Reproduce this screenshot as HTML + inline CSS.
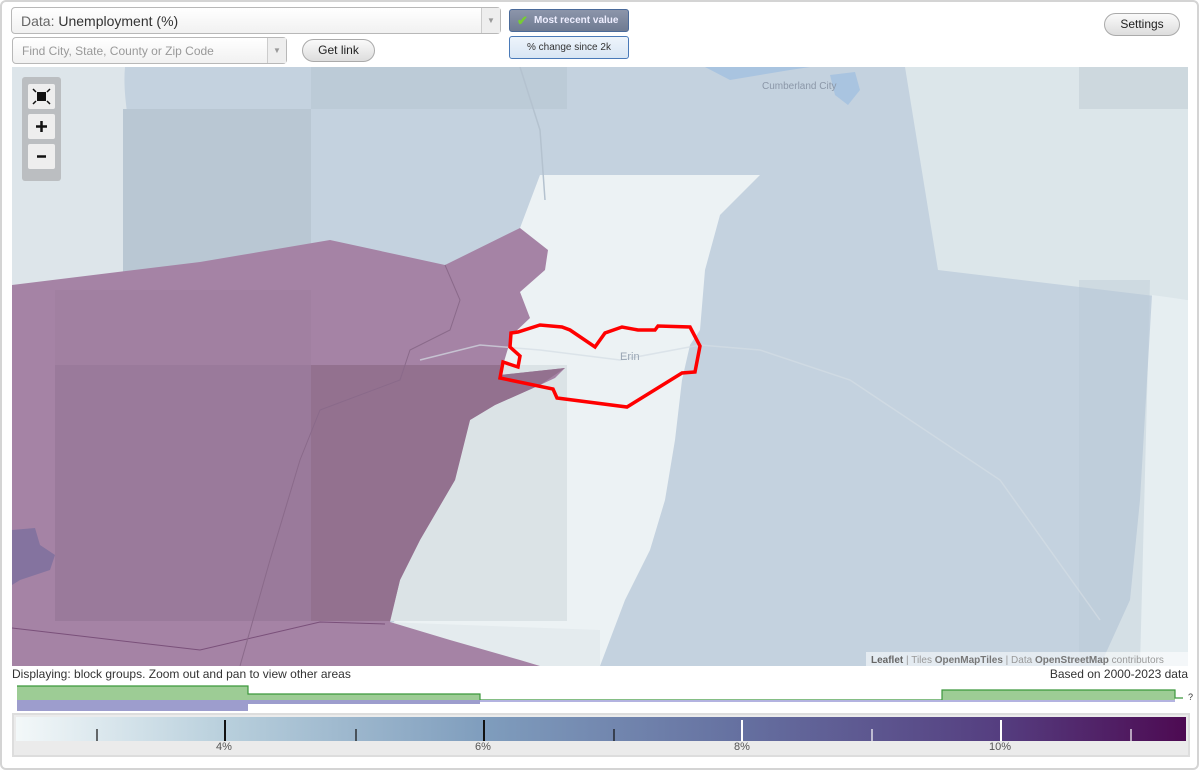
<!DOCTYPE html>
<html><head><meta charset="utf-8"><style>
*{margin:0;padding:0;box-sizing:border-box}
body{width:1200px;height:771px;background:#fff;font-family:"Liberation Sans",Arial,sans-serif;position:relative;overflow:hidden}
.frame{position:absolute;left:0;top:0;width:1199px;height:770px;border:2px solid #d4d4d4;border-radius:6px}
.sel{position:absolute;border:1px solid #b8b8b8;border-radius:4px;background:linear-gradient(#fff,#f1f1f1);}
.arrow{position:absolute;right:0;top:0;bottom:0;width:19px;border-left:1px solid #ccc;background:#eee;color:#999;font-size:8px;text-align:center}
.btn{position:absolute;border:1px solid #aaa;border-radius:12px;background:linear-gradient(#fafafa,#ddd);font-size:12px;text-align:center;color:#222}
.t{position:absolute;font-size:12px;color:#333;white-space:nowrap}
</style></head><body>
<div class="frame"></div>
<div class="sel" style="left:11px;top:7px;width:490px;height:27px"><span style="position:absolute;left:9px;top:5px;font-size:14px;color:#666">Data: <span style="color:#333">Unemployment (%)</span></span><div class="arrow" style="line-height:26px">▼</div></div>
<div class="sel" style="left:12px;top:37px;width:275px;height:27px"><span style="position:absolute;left:9px;top:6px;font-size:12px;color:#999">Find City, State, County or Zip Code</span><div class="arrow" style="line-height:26px">▼</div></div>
<div class="btn" style="left:302px;top:39px;width:73px;height:23px;line-height:21px">Get link</div>
<div style="position:absolute;left:509px;top:9px;width:120px;height:23px;border:1px solid #4a6a9a;border-radius:3px;background:linear-gradient(#8c95aa,#6f7b92);color:#eef;font-size:10px;font-weight:bold;line-height:21px;padding-left:24px">Most recent value<span style="position:absolute;left:7px;top:0;color:#7c3;font-size:13px">✔</span></div>
<div style="position:absolute;left:509px;top:36px;width:120px;height:23px;border:1px solid #4a7ab8;border-radius:3px;background:linear-gradient(#eef4fb,#d8e6f4);color:#333;font-size:10px;line-height:21px;text-align:center">% change since 2k</div>
<div class="btn" style="left:1104px;top:13px;width:76px;height:23px;line-height:21px">Settings</div>

<svg style="position:absolute;left:12px;top:67px" width="1176" height="599" viewBox="12 67 1176 599">
<rect x="12" y="67" width="1176" height="599" fill="#c4d2df"/>
<path d="M12 67 H125 C120 120 150 200 160 285 L12 290Z" fill="#dde5ea"/>
<rect x="123" y="109" width="188" height="180" fill="#b9c7d3"/>
<rect x="311" y="67" width="256" height="42" fill="#b9c7d3" opacity=".7"/>
<path d="M905 67 H1188 V300 L938 270Z" fill="#dce6ea"/>
<rect x="1079" y="67" width="109" height="42" fill="#cdd8de"/>
<path d="M1152 295 L1188 300 V666 H1100 L1130 600 L1140 500Z" fill="#e6eef1"/>
<path d="M1079 280 H1150 L1140 666 H1079Z" fill="#b9c7d4" opacity=".4"/>
<path d="M705 67 L730 80 L760 75 L790 70 L810 67Z" fill="#a9c4e0"/>
<path d="M830 75 L855 72 L860 90 L848 105 L835 95Z" fill="#a9c4e0"/>
<path d="M540 175 H760 L720 215 L705 270 L700 330 L690 345 L682 380 L675 440 L665 500 L650 550 L625 600 L600 666 H380 L520 228Z" fill="#ecf2f4"/>
<rect x="380" y="365" width="187" height="256" fill="#dbe3e6"/>
<path d="M385 622 L600 630 L600 666 H380Z" fill="#e4ebee"/>
<path d="M12 285 L200 262 L330 240 L445 265 L520 228 L548 250 L545 270 L520 292 L530 318 L512 335 L500 375 L565 368 L555 378 L540 385 L495 405 L470 420 L455 480 L420 540 L400 580 L390 622 L450 640 L520 660 L540 666 H12Z" fill="#a583a5"/>
<rect x="55" y="365" width="256" height="256" fill="#9a7a9b"/>
<path d="M311 365 H500 L500 375 L565 368 L540 385 L495 405 L470 420 L455 480 L420 540 L400 580 L390 621 H311Z" fill="#93718f"/>
<rect x="55" y="290" width="256" height="75" fill="#9e7e9f" opacity=".6"/>
<path d="M12 530 L35 528 L40 545 L55 555 L50 570 L20 580 L12 585Z" fill="#84739f"/>
<path d="M12 628 L200 650 L320 622 L385 624" stroke="#7a507a" fill="none" stroke-width="1"/>
<path d="M445 265 L460 300 L450 330 L410 350 L400 380 L320 410 L300 460 L270 560 L240 666" stroke="#8a6a8a" fill="none" stroke-width="1"/>
<path d="M520 67 L540 130 L545 200" stroke="#b4c2cf" fill="none" stroke-width="1.5"/>
<path d="M420 360 L480 345 L540 350 L620 360 L700 345 L760 350 L850 380 L1000 480 L1100 620" stroke="#d4dde4" fill="none" stroke-width="1.5" opacity=".7"/>
<text x="620" y="360" font-size="11" fill="#9aa6b4" font-family="Liberation Sans">Erin</text>
<text x="762" y="89" font-size="10" fill="#8b97a8" font-family="Liberation Sans">Cumberland City</text>
<path d="M511 333 L518 332 L540 325 L562 327 L570 330 L595 347 L605 333 L622 327 L638 330 L655 330 L658 326 L690 327 L700 346 L695 372 L682 373 L627 407 L557 398 L553 389 L500 378 L503 362 L518 367 L520 356 L510 347Z" fill="none" stroke="#f00" stroke-width="3.5"/>
<rect x="22" y="77" width="39" height="104" rx="3" fill="#9e9e9e" opacity=".55"/>
<rect x="28" y="84" width="27" height="25" rx="2" fill="#eee"/>
<rect x="37" y="92" width="9" height="9" fill="#111"/>
<path d="M33 89l3 3M50 89l-3 3M33 104l3-3M50 104l-3-3" stroke="#111" stroke-width="1.5"/>
<rect x="28" y="114" width="27" height="25" rx="2" fill="#eee"/>
<path d="M41.5 121v11M36 126.5h11" stroke="#111" stroke-width="2.5"/>
<rect x="28" y="144" width="27" height="25" rx="2" fill="#eee"/>
<path d="M37 156.5h9" stroke="#111" stroke-width="2.5"/>
<rect x="866" y="652" width="322" height="14" fill="#fff" opacity=".55"/>
<text x="871" y="663" font-size="10" fill="#999" font-family="Liberation Sans"><tspan fill="#666" font-weight="bold">Leaflet</tspan> | Tiles <tspan fill="#777" font-weight="bold">OpenMapTiles</tspan> | Data <tspan fill="#777" font-weight="bold">OpenStreetMap</tspan> contributors</text>
</svg>

<div class="t" style="left:12px;top:667px">Displaying: block groups. Zoom out and pan to view other areas</div>
<div class="t" style="right:12px;top:667px">Based on 2000-2023 data</div>
<svg style="position:absolute;left:0;top:684px" width="1200" height="28">
<path d="M17 2 H248 V10 H480 V16 H942 V6 H1175 V16 H17Z" fill="#9dcc95"/>
<path d="M17 2 H248 V10 H480 V16 H942 V6 H1175 V14 H1183" fill="none" stroke="#3c983c" stroke-width="1.2"/>
<path d="M17 16 H480 V20 H248 V27 H17Z" fill="#9d9dcd"/>
<path d="M480 16 H1175 V18 H480Z" fill="#b3b3e0"/>
<text x="1188" y="16" font-size="9" font-family="Liberation Sans" fill="#333">?</text>
</svg>
<div style="position:absolute;left:12px;top:713px;width:1178px;height:44px;border:2px solid #ddd;background:#ebebeb">
<div style="position:absolute;left:2px;top:2px;width:1170px;height:24px;background:linear-gradient(90deg,#f3f8f9 0%,#b8cfdc 18%,#7f9dbd 40%,#6570a0 62%,#553e80 84%,#4d0a52 100%)"></div>
<svg style="position:absolute;left:0;top:0" width="1178" height="28">
<g stroke-width="1.2"><path d="M83 14V26M342 14V26M600 14V26" stroke="#111"/><path d="M211 5V26M470 5V26" stroke="#111" stroke-width="2"/><path d="M858 14V26M1117 14V26" stroke="#fff"/><path d="M728 5V26M987 5V26" stroke="#fff" stroke-width="2"/></g>
</svg>
<div class="t" style="left:202px;top:26px;font-size:11px;color:#555">4%</div>
<div class="t" style="left:461px;top:26px;font-size:11px;color:#555">6%</div>
<div class="t" style="left:720px;top:26px;font-size:11px;color:#555">8%</div>
<div class="t" style="left:975px;top:26px;font-size:11px;color:#555">10%</div>
</div>
</body></html>
